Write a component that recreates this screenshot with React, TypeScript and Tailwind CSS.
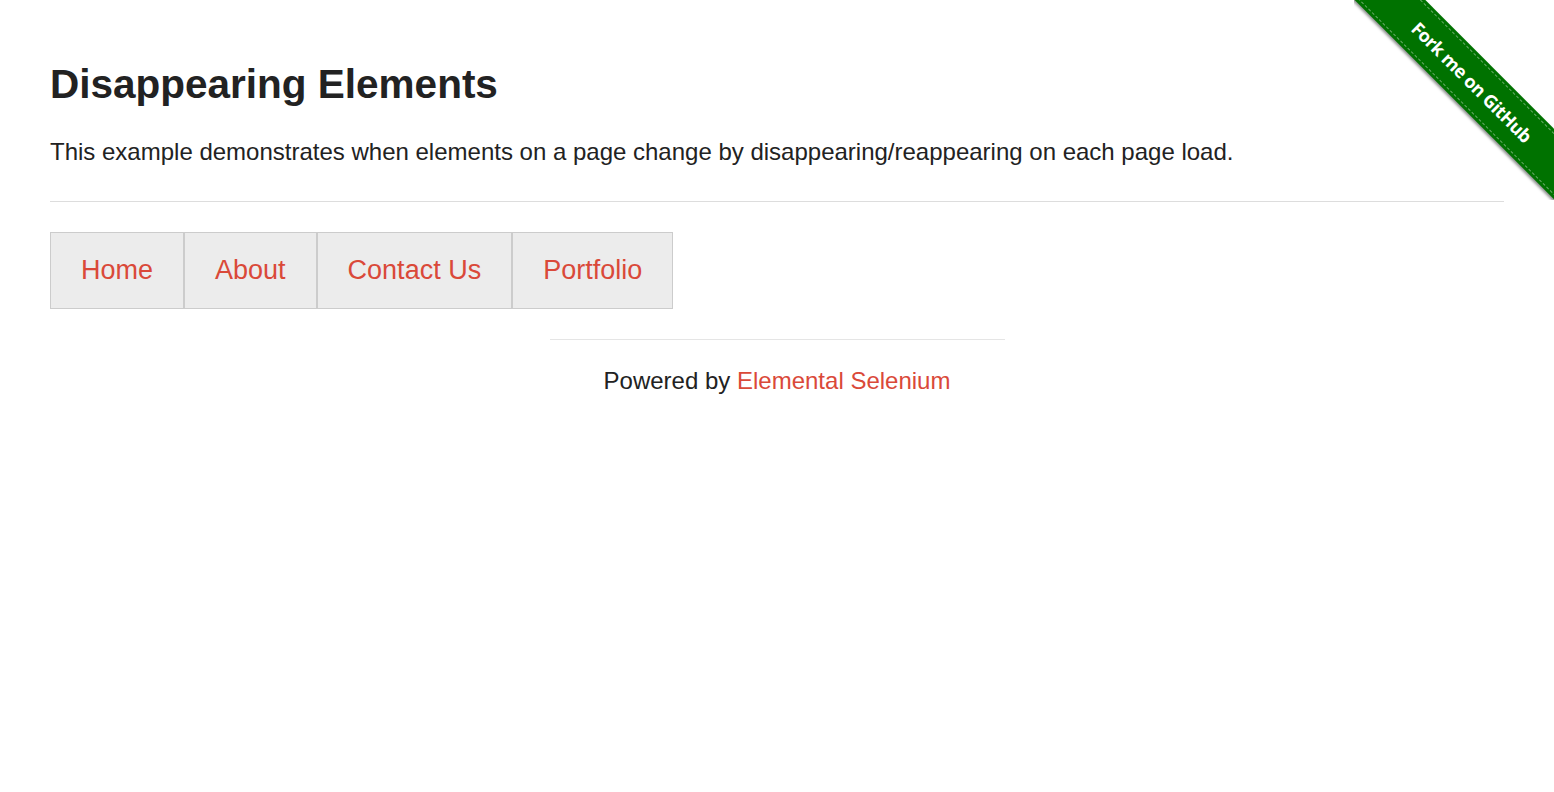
const links = ['Home', 'About', 'Contact Us', 'Portfolio'];

function Ribbon() {
  return (
    <div className="absolute top-0 right-0 w-[200px] h-[200px] overflow-hidden pointer-events-none">
      <div className="absolute left-[-32px] top-[57px] w-[300px] h-[50px] rotate-45 bg-[#007200] shadow-[0_2px_3px_rgba(0,0,0,0.45)] flex items-center">
        <div className="w-full h-[44px] border-y border-dashed border-white/40 flex items-center justify-center">
          <span className="text-white text-[18px] font-bold tracking-tight [font-family:'Open_Sans',sans-serif]">
            Fork me on GitHub
          </span>
        </div>
      </div>
    </div>
  );
}

export default function App() {
  return (
    <div className="relative min-h-[792px] bg-white text-[#222] [font-family:'Liberation_Sans',Arial,sans-serif]">
      <Ribbon />
      <div className="px-[50px] pt-[60px]">
        <h3 className="text-[40.5px] leading-[48px] font-bold">Disappearing Elements</h3>
        <p className="mt-[28px] text-[24px] leading-[32px]">
          This example demonstrates when elements on a page change by disappearing/reappearing on each page load.
        </p>
        <hr className="mt-[33px] border-t border-[#ddd]" />
        <ul className="mt-[30px] flex">
          {links.map((l) => (
            <li key={l} className="h-[77px] px-[30px] flex items-center bg-[#ececec] border border-[#ccc]">
              <a href="#" className="text-[27px] leading-none text-[#da4939]">
                {l}
              </a>
            </li>
          ))}
        </ul>
        <div className="mt-[30px] flex flex-col items-center">
          <hr className="w-[455px] border-t border-[#e5e5e5]" />
          <div className="mt-[25px] text-[24px] leading-[32px]">
            Powered by{' '}
            <a href="#" className="text-[#da4939]">
              Elemental Selenium
            </a>
          </div>
        </div>
      </div>
    </div>
  );
}
